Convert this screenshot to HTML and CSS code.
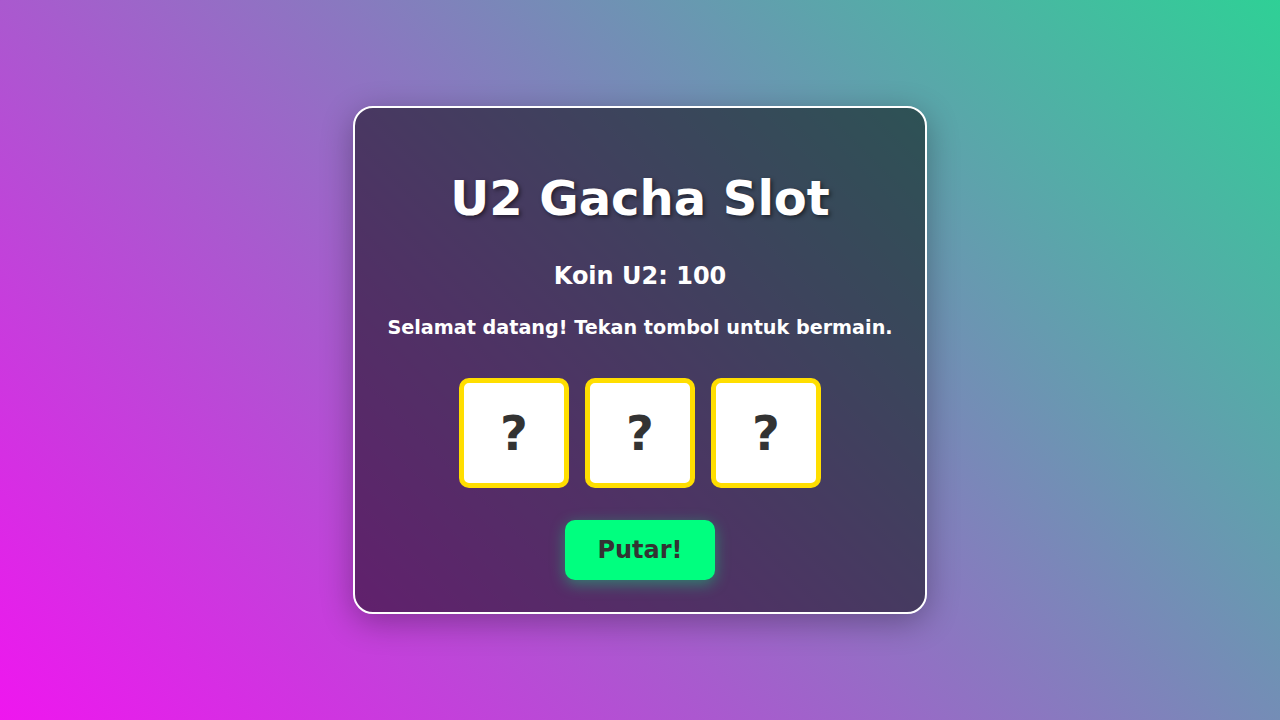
FILE: index.html
```html
<!DOCTYPE html>
<html lang="id">
<head>
<meta charset="utf-8">
<title>U2 Gacha Slot</title>
<link rel="stylesheet" href="styles.css">
</head>
<body>
<main class="card">
  <h1 class="title">U2 Gacha Slot</h1>
  <p class="coins">Koin U2: 100</p>
  <p class="message">Selamat datang! Tekan tombol untuk bermain.</p>
  <div class="slots">
    <div class="slot">?</div>
    <div class="slot">?</div>
    <div class="slot">?</div>
  </div>
  <button class="spin">Putar!</button>
</main>
</body>
</html>
```
FILE: styles.css
```css
html, body {
  margin: 0;
  height: 100%;
}
body {
  font-family: "DejaVu Sans", sans-serif;
  background: linear-gradient(45deg, #ef16ef, #2fd096);
  display: flex;
  align-items: center;
  justify-content: center;
  color: #fff;
}
.card {
  width: 510px;
  padding: 30px 30px 32px;
  background: rgba(0, 0, 0, 0.5);
  border: 2px solid #fff;
  border-radius: 20px;
  box-shadow: 0 8px 32px rgba(0, 0, 0, 0.3);
  text-align: center;
  display: flex;
  flex-direction: column;
  align-items: center;
}
.title {
  font-size: 48px;
  font-weight: bold;
  margin: 32px 0 36px;
  text-shadow: 2px 2px 4px rgba(0, 0, 0, 0.5);
}
.coins {
  font-size: 24px;
  font-weight: bold;
  margin: 0 0 26px;
}
.message {
  font-size: 19.2px;
  font-weight: bold;
  margin: 0 0 39px;
}
.slots {
  display: flex;
  gap: 16px;
  margin-bottom: 32px;
}
.slot {
  width: 100px;
  height: 100px;
  background: #fff;
  border: 5px solid #ffde00;
  border-radius: 10px;
  color: #333;
  font-size: 48px;
  font-weight: bold;
  display: flex;
  align-items: center;
  justify-content: center;
}
.spin {
  width: 150px;
  height: 60px;
  border: none;
  border-radius: 10px;
  background: #00ff7f;
  color: #333;
  font-family: "DejaVu Sans", sans-serif;
  font-size: 24px;
  font-weight: bold;
  box-shadow: 0 4px 15px rgba(0, 255, 127, 0.4);
  cursor: pointer;
}
```
